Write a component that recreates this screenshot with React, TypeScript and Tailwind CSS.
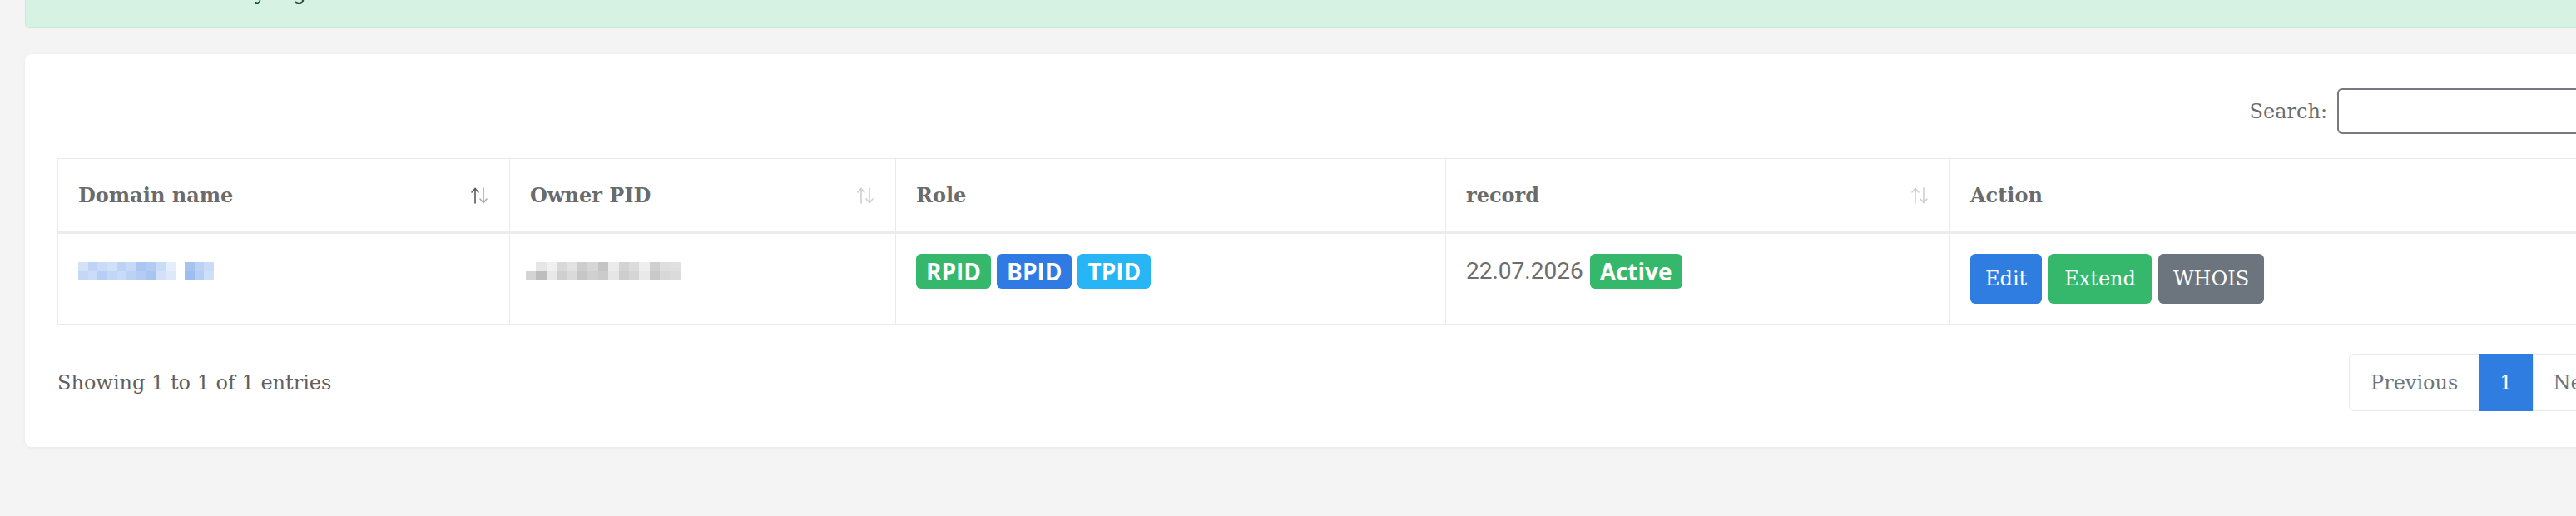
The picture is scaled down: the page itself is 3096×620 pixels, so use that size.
import React from "react";

const domainCells = [
  ["#d3e2f9", "#c4d8f6"], ["#bed4f5", "#cadcf7"], ["#c9dbf7", "#b8cff4"], ["#d0e0f8", "#c2d6f6"],
  ["#bcd2f5", "#c7daf7"], ["#c6d9f6", "#bcd2f5"], ["#aac6f1", "#b4ccf3"], ["#b2cbf3", "#a9c4f0"],
  ["#c8dbf7", "#d2e1f8"], ["#e4edfb", "#dde8fa"],
];
const domainTail = [["#a6c2f0", "#9dbcef"], ["#bcd2f5", "#b7cff4"], ["#c9dbf7", "#cfdff8"]];

const ownerCells = [
  ["#ffffff", "#d4d4d4"], ["#e6e6e6", "#bdbdbd"], ["#f0f0f0", "#e8e8e8"], ["#d8d8d8", "#cfcfcf"],
  ["#e2e2e2", "#dadada"], ["#cdcdcd", "#c6c6c6"], ["#d6d6d6", "#d0d0d0"], ["#c4c4c4", "#cbcbcb"],
  ["#ebebeb", "#e6e6e6"], ["#d3d3d3", "#cecece"], ["#dcdcdc", "#d5d5d5"], ["#eeeeee", "#e9e9e9"],
  ["#cfcfcf", "#c9c9c9"], ["#dedede", "#d8d8d8"], ["#e0e0e0", "#dbdbdb"],
];

function Pixels({ cells, w }: { cells: string[][]; w: number }) {
  return (
    <div className="flex">
      {cells.map((c, i) => (
        <div key={i} className="flex flex-col" style={{ width: w }}>
          <div className="h-[11px]" style={{ background: c[0] }} />
          <div className="h-[11px]" style={{ background: c[1] }} />
        </div>
      ))}
    </div>
  );
}

function SortIcon({ active }: { active?: boolean }) {
  return (
    <svg width="24" height="20" viewBox="0 0 24 20" fill="none" strokeWidth="1.6" strokeLinecap="round">
      <g stroke={active ? "#5a5a5a" : "#cfcfcf"}>
        <line x1="7" y1="2" x2="7" y2="19" />
        <polyline points="3,6 7,1.5 11,6" />
      </g>
      <g stroke={active ? "#a9a9a9" : "#cfcfcf"}>
        <line x1="17" y1="1" x2="17" y2="18" />
        <polyline points="13,14 17,18.5 21,14" />
      </g>
    </svg>
  );
}

function Badge({ text, color }: { text: string; color: string }) {
  return (
    <span
      className={`${color} h-[42px] px-[12px] rounded-[6px] flex items-center text-white text-[28px] font-bold leading-none font-['Open_Sans',sans-serif]`}
    >
      {text}
    </span>
  );
}

export default function App() {
  return (
    <div className="w-full h-[620px] overflow-hidden bg-[#f4f4f4] font-['DejaVu_Serif',serif]">
      <div className="flex flex-col pl-[30px]">
        <div className="w-[3161px] shrink-0 -mt-[44px] px-[40px] pt-[17px] pb-[23px] bg-[#d5f2e2] border border-[#c4ecd5] rounded-[6px] text-[24px] leading-[36px] text-[#1d4b33]">
          Domain successfully registered.
        </div>

        <div className="w-[3161px] shrink-0 mt-[31px] bg-white rounded-[8px] shadow-[0_1px_4px_rgba(0,0,0,0.05)] px-[39px] pt-[41px] pb-[43px]">
          <div className="flex justify-end items-center gap-[12px]">
            <label className="text-[24px] text-[#6b6b6b]">Search:</label>
            <input className="w-[343px] h-[55px] border-2 border-[#787882] rounded-[6px] bg-white" />
          </div>

          <table className="mt-[29px] w-[3083px] table-fixed border-collapse border border-[#ebebeb]">
            <colgroup>
              <col className="w-[543px]" />
              <col className="w-[464px]" />
              <col className="w-[661px]" />
              <col className="w-[606px]" />
              <col />
            </colgroup>
            <thead>
              <tr className="border-b-[3px] border-[#ececec]">
                <th className="h-[89px] px-[24px] text-left font-bold text-[24px] text-[#6b6b6b] border-x border-[#ebebeb]">
                  <div className="flex items-center justify-between">
                    <span>Domain name</span>
                    <SortIcon active />
                  </div>
                </th>
                <th className="h-[89px] px-[24px] text-left font-bold text-[24px] text-[#6b6b6b] border-x border-[#ebebeb]">
                  <div className="flex items-center justify-between">
                    <span>Owner PID</span>
                    <SortIcon />
                  </div>
                </th>
                <th className="h-[89px] px-[24px] text-left font-bold text-[24px] text-[#6b6b6b] border-x border-[#ebebeb]">
                  Role
                </th>
                <th className="h-[89px] px-[24px] text-left font-bold text-[24px] text-[#6b6b6b] border-x border-[#ebebeb]">
                  <div className="flex items-center justify-between">
                    <span>record</span>
                    <SortIcon />
                  </div>
                </th>
                <th className="h-[89px] px-[24px] text-left font-bold text-[24px] text-[#6b6b6b] border-x border-[#ebebeb]">
                  Action
                </th>
              </tr>
            </thead>
            <tbody>
              <tr>
                <td className="align-top px-[24px] pt-[24px] pb-[24px] h-[108px] border-x border-[#ebebeb]">
                  <div className="mt-[10px] flex gap-[11px]">
                    <Pixels cells={domainCells} w={11.7} />
                    <Pixels cells={domainTail} w={11.7} />
                  </div>
                </td>
                <td className="align-top px-[24px] pt-[24px] pb-[24px] border-x border-[#ebebeb]">
                  <div className="mt-[10px] -ml-[5px]">
                    <Pixels cells={ownerCells} w={12.4} />
                  </div>
                </td>
                <td className="align-top px-[24px] pt-[24px] pb-[24px] border-x border-[#ebebeb]">
                  <div className="flex gap-[7px]">
                    <Badge text="RPID" color="bg-[#35b86b]" />
                    <Badge text="BPID" color="bg-[#2f7be3]" />
                    <Badge text="TPID" color="bg-[#27b5f5]" />
                  </div>
                </td>
                <td className="align-top px-[24px] pt-[24px] pb-[24px] border-x border-[#ebebeb]">
                  <div className="flex items-center gap-[8px]">
                    <span className="text-[28px] text-[#6d6d6d] font-['Roboto',sans-serif]">22.07.2026</span>
                    <Badge text="Active" color="bg-[#35b86b]" />
                  </div>
                </td>
                <td className="align-top px-[24px] pt-[24px] pb-[24px] border-x border-[#ebebeb]">
                  <div className="flex gap-[8px]">
                    <button className="h-[60px] px-[18px] rounded-[6px] bg-[#2f7de1] text-white text-[24px]">Edit</button>
                    <button className="h-[60px] px-[19px] rounded-[6px] bg-[#35b86b] text-white text-[24px]">Extend</button>
                    <button className="h-[60px] px-[18px] rounded-[6px] bg-[#6c757d] text-white text-[24px]">WHOIS</button>
                  </div>
                </td>
              </tr>
            </tbody>
          </table>

          <div className="mt-[35px] flex items-center justify-between">
            <div className="text-[24px] text-[#5f5f5f]">Showing 1 to 1 of 1 entries</div>
            <div className="flex h-[69px] text-[24px]">
              <div className="flex items-center px-[25px] border border-[#e6e8eb] rounded-l-[6px] text-[#6c757d]">Previous</div>
              <div className="flex items-center px-[24px] bg-[#2f7de1] text-white">1</div>
              <div className="flex items-center px-[24px] border border-[#e6e8eb] rounded-r-[6px] text-[#6c757d]">Next</div>
            </div>
          </div>
        </div>
      </div>
    </div>
  );
}
